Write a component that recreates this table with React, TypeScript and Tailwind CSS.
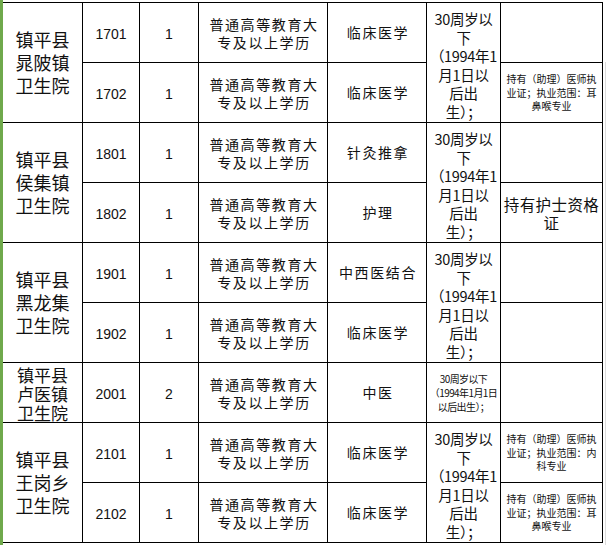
import React from 'react';

type Row = { code: string; count: string; major: string; note?: 'ent' | 'internal' | 'nurse' };
type Group = { name: string[]; rows: Row[] };

const groups: Group[] = [
  {
    name: ['镇平县', '晁陂镇', '卫生院'],
    rows: [
      { code: '1701', count: '1', major: '临床医学' },
      { code: '1702', count: '1', major: '临床医学', note: 'ent' },
    ],
  },
  {
    name: ['镇平县', '侯集镇', '卫生院'],
    rows: [
      { code: '1801', count: '1', major: '针灸推拿' },
      { code: '1802', count: '1', major: '护理', note: 'nurse' },
    ],
  },
  {
    name: ['镇平县', '黑龙集', '卫生院'],
    rows: [
      { code: '1901', count: '1', major: '中西医结合' },
      { code: '1902', count: '1', major: '临床医学' },
    ],
  },
  {
    name: ['镇平县', '卢医镇', '卫生院'],
    rows: [{ code: '2001', count: '2', major: '中医' }],
  },
  {
    name: ['镇平县', '王岗乡', '卫生院'],
    rows: [
      { code: '2101', count: '1', major: '临床医学', note: 'internal' },
      { code: '2102', count: '1', major: '临床医学', note: 'ent' },
    ],
  },
];

const cjk = "font-['Noto_Sans_CJK_SC',sans-serif]";
const num = "font-['Liberation_Sans','Noto_Sans_CJK_SC',sans-serif]";

const Cell = ({ className = '', children }: { className?: string; children?: React.ReactNode }) => (
  <div className={`bg-white flex items-center justify-center text-center overflow-hidden whitespace-nowrap text-[#111] ${className}`}>
    {children}
  </div>
);

const Note = ({ note }: { note?: Row['note'] }) => {
  if (!note) return <Cell />;
  if (note === 'nurse') {
    return (
      <Cell className={`${cjk} text-[15.5px] leading-[18px] tracking-[0.4px]`}>
        <span>
          持有护士资格
          <br />
          证
        </span>
      </Cell>
    );
  }
  return (
    <Cell className={`${cjk} text-[10px] leading-[13.5px] text-[#3a3a3a]`}>
      <span>
        持有（助理）医师执
        <br />
        业证；执业范围：{note === 'ent' ? '耳' : '内'}
        <br />
        {note === 'ent' ? '鼻喉专业' : '科专业'}
      </span>
    </Cell>
  );
};

// 合并单元格里的年龄要求
const Age = ({ big }: { big: boolean }) =>
  big ? (
    <Cell className={`row-span-2 ${cjk} text-[14.5px] leading-[18.5px] tracking-[-0.3px] pt-[6px]`}>
      <span>
        30周岁以
        <br />下<br />
        （1994年1
        <br />
        月1日以
        <br />
        后出
        <br />
        生）；
      </span>
    </Cell>
  ) : (
    <Cell className={`${cjk} text-[10px] leading-[14px] tracking-[-0.6px]`}>
      <span>
        30周岁以下
        <br />
        （1994年1月1日
        <br />
        以后出生）；
      </span>
    </Cell>
  );

export default function App() {
  return (
    <div className="w-[607px] h-[545px] bg-white flex">
      <div className="w-[3px] h-full bg-[#6fa94c]" />
      <div className="pt-[2px]">
        <div className="grid grid-cols-[79px_56px_58px_128px_98px_73px_101px] grid-rows-[repeat(9,59px)] gap-px bg-black border-t border-b border-r border-black">
          {groups.map((g) => {
            const span = g.rows.length === 2;
            return (
              <React.Fragment key={g.rows[0].code}>
                <Cell
                  className={`${cjk} ${span ? 'row-span-2 leading-[23px] text-[18px]' : 'leading-[19px] text-[17px] pt-[1px]'}`}
                >
                  <span>
                    {g.name.map((l, i) => (
                      <React.Fragment key={i}>
                        {i > 0 && <br />}
                        {l}
                      </React.Fragment>
                    ))}
                  </span>
                </Cell>
                {g.rows.map((r, i) => (
                  <React.Fragment key={r.code}>
                    <Cell className={`${num} text-[14px] pt-[3px]`}>{r.code}</Cell>
                    <Cell className={`${num} text-[14px] pt-[3px]`}>{r.count}</Cell>
                    <Cell className={`${cjk} text-[14px] leading-[18px] tracking-[1.6px] pl-[2px]`}>
                      <span>
                        普通高等教育大
                        <br />
                        专及以上学历
                      </span>
                    </Cell>
                    <Cell className={`${cjk} text-[14px] tracking-[1.6px] pl-[2px]`}>{r.major}</Cell>
                    {i === 0 && <Age big={span} />}
                    <Note note={r.note} />
                  </React.Fragment>
                ))}
              </React.Fragment>
            );
          })}
        </div>
      </div>
      <div className="pl-[2px] flex flex-col">
        <div className="h-[62px]" />
        <div className="w-px flex-1 bg-[#dcdcdc]" />
      </div>
    </div>
  );
}
